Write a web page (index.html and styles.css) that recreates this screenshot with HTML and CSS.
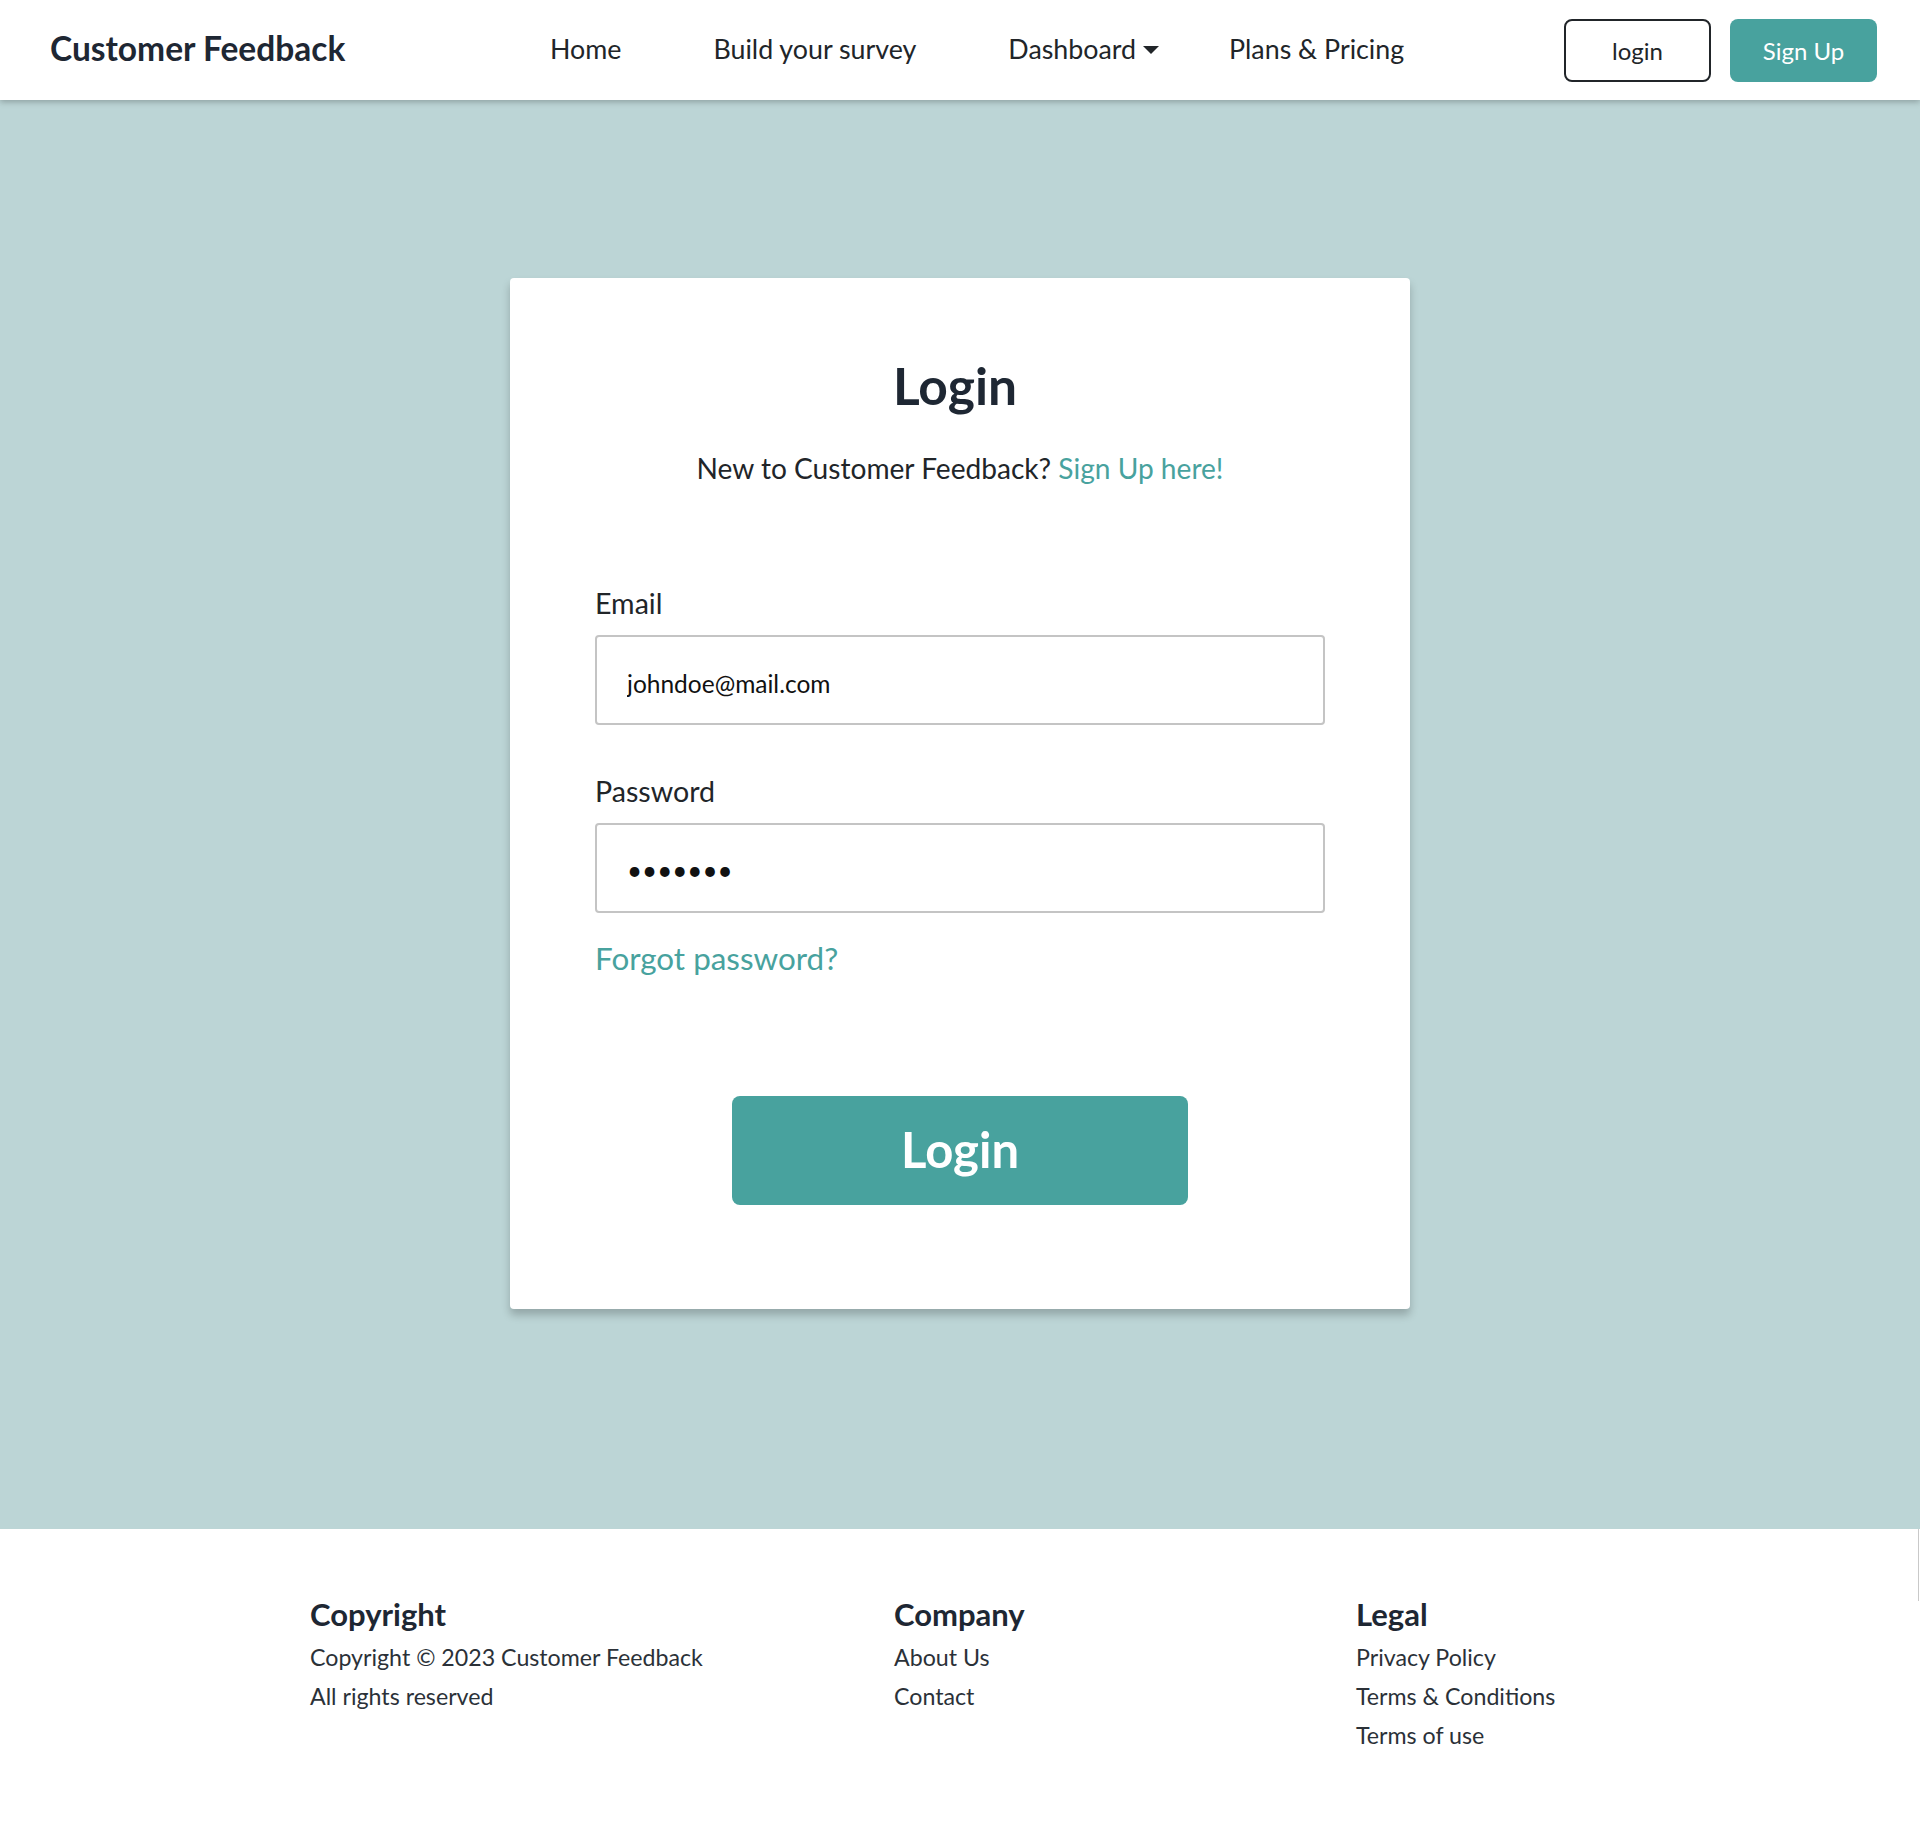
FILE: index.html
```html
<!DOCTYPE html>
<html lang="en">
<head>
    <meta charset="UTF-8">
    <meta name="viewport" content="width=device-width, initial-scale=1.0">
    <title>Customer Feedback - Login</title>
    <link rel="stylesheet" href="styles.css">
</head>
<body>
    <header class="navbar">
        <a class="brand" href="#">Customer Feedback</a>
        <nav class="nav-links">
            <a href="#" class="nav-home">Home</a>
            <a href="#" class="nav-build">Build your survey</a>
            <a href="#" class="nav-dash">Dashboard
                <svg class="caret" width="18" height="10" viewBox="0 0 18 10"><path d="M1 1h16l-8 8z" fill="#212529"/></svg>
            </a>
            <a href="#" class="nav-plans">Plans &amp; Pricing</a>
        </nav>
        <div class="nav-actions">
            <a href="#" class="btn-outline">login</a>
            <a href="#" class="btn-fill">Sign Up</a>
        </div>
    </header>

    <main class="page">
        <section class="login-card">
            <h1>Login</h1>
            <p class="subtitle">New to Customer Feedback? <a href="#">Sign Up here!</a></p>

            <form class="login-form">
                <label for="email">Email</label>
                <input type="email" id="email" value="johndoe@mail.com">

                <label for="password" class="pw-label">Password</label>
                <input type="password" id="password" value="1234567">

                <a href="#" class="forgot">Forgot password?</a>

                <button type="button" class="btn-login">Login</button>
            </form>
        </section>
    </main>

    <footer class="footer">
        <div class="footer-inner">
            <div class="footer-col">
                <h3>Copyright</h3>
                <p>Copyright &copy; 2023 Customer Feedback</p>
                <p>All rights reserved</p>
            </div>
            <div class="footer-col">
                <h3>Company</h3>
                <a href="#">About Us</a>
                <a href="#">Contact</a>
            </div>
            <div class="footer-col">
                <h3>Legal</h3>
                <a href="#">Privacy Policy</a>
                <a href="#">Terms &amp; Conditions</a>
                <a href="#">Terms of use</a>
            </div>
        </div>
    </footer>
</body>
</html>
```

FILE: styles.css
```css
* {
    margin: 0;
    padding: 0;
    box-sizing: border-box;
}

body {
    font-family: 'Lato', 'Liberation Sans', sans-serif;
    color: #212529;
    background-color: #fff;
}

a {
    text-decoration: none;
    color: inherit;
}

/* navbar */
.navbar {
    height: 100px;
    display: flex;
    align-items: center;
    padding: 0 43px 0 50px;
    background-color: #fff;
    box-shadow: 0 2px 6px rgba(0, 0, 0, 0.25);
    position: relative;
    z-index: 2;
}

.brand {
    font-size: 33.5px;
    font-weight: 700;
    color: #1e2733;
    width: 500px;
    margin-top: -4px;
}

.nav-links {
    display: flex;
    align-items: center;
    font-size: 26.8px;
    color: #212529;
    margin-top: -3px;
}

.nav-home {
    margin-right: 92px;
}

.nav-build {
    margin-right: 92px;
}

.nav-dash {
    display: flex;
    align-items: center;
    margin-right: 69px;
}

.caret {
    margin-left: 6px;
    margin-top: 3px;
}

.nav-actions {
    margin-left: auto;
    display: flex;
    gap: 19px;
}

.btn-outline,
.btn-fill {
    width: 147px;
    height: 63px;
    display: flex;
    align-items: center;
    justify-content: center;
    font-size: 24px;
    border-radius: 8px;
}

.btn-outline {
    border: 2px solid #212529;
    color: #212529;
}

.btn-fill {
    background-color: #48a29e;
    color: #fff;
}

/* main */
.page {
    background-color: #bcd5d6;
    padding: 178px 0 220px;
}

.login-card {
    width: 900px;
    margin: 0 auto;
    background-color: #fff;
    border-radius: 4px;
    padding: 78px 85px 104px;
    box-shadow: 0 6px 8px rgba(0, 0, 0, 0.22);
    text-align: center;
}

.login-card h1 {
    font-size: 51.5px;
    line-height: 62px;
    font-weight: 700;
    color: #1e2733;
    margin-left: -10px;
    margin-top: -2px;
    margin-bottom: 4px;
}

.subtitle {
    margin-top: 35px;
    font-size: 28.1px;
    line-height: 34px;
}

.subtitle a,
.forgot {
    color: #48a29e;
}

.login-form {
    margin-top: 101px;
    text-align: left;
    display: flex;
    flex-direction: column;
}

.login-form label {
    font-size: 28.6px;
    line-height: 34px;
}

.login-form .pw-label {
    margin-top: 49px;
}

.login-form input {
    margin-top: 15px;
    height: 90px;
    width: 100%;
    border: 2px solid #c4c4c4;
    border-radius: 4px;
    padding: 6px 30px 0;
    font-family: 'Lato', sans-serif;
    font-size: 24.5px;
    color: #111;
}

.login-form input[type="password"] {
    font-size: 26px;
    letter-spacing: 0;
    padding-top: 4px;
}

.forgot {
    margin-top: 27px;
    font-size: 31.4px;
    line-height: 36px;
    align-self: flex-start;
}

.btn-login {
    margin: 120px auto 0;
    width: 456px;
    height: 109px;
    border: none;
    border-radius: 8px;
    background-color: #48a29e;
    color: #fff;
    font-family: 'Lato', sans-serif;
    font-size: 49px;
    font-weight: 700;
    padding-bottom: 4px;
    cursor: pointer;
}

/* footer */
.footer {
    background-color: #fff;
    padding: 68px 0 80px;
    position: relative;
}

/* thin line at the right edge below the main area */
.footer::after {
    content: "";
    position: absolute;
    top: 0;
    right: 1px;
    width: 1px;
    height: 72px;
    background-color: #c9c9c9;
}

.footer-inner {
    width: 1300px;
    margin: 0 auto;
    display: grid;
    grid-template-columns: 584px 462px 1fr;
}

.footer-col {
    display: flex;
    flex-direction: column;
    align-items: flex-start;
}

.footer-col h3 {
    font-size: 31px;
    line-height: 34px;
    font-weight: 700;
    color: #1e2733;
    margin-bottom: 7px;
}

.footer-col p,
.footer-col a {
    font-size: 23.2px;
    line-height: 39px;
    color: #2b3138;
}
```
